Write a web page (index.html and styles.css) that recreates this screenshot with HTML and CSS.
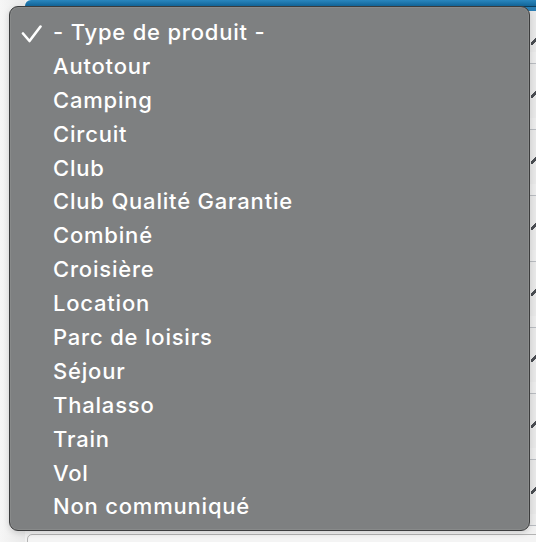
FILE: index.html
```html
<!DOCTYPE html>
<html lang="fr">
<head>
<meta charset="utf-8">
<title>Type de produit</title>
<link rel="stylesheet" href="styles.css">
</head>
<body>
<div class="page">
  <div class="shade"></div>
  <div class="table">
    <div class="head"></div>
    <div class="row first"><span class="tick"></span></div>
    <div class="row"><span class="tick"></span></div>
    <div class="row"><span class="tick"></span></div>
    <div class="row"><span class="tick"></span></div>
    <div class="row"><span class="tick"></span></div>
    <div class="row"><span class="tick"></span></div>
    <div class="row"><span class="tick"></span></div>
    <div class="row"><span class="tick"></span></div>
  </div>
  <div class="below"></div>
</div>

<ul class="menu">
  <li class="item selected">
    <svg class="check" width="22" height="18" viewBox="0 0 22 18"><polyline points="2,8.5 8.5,16 19.5,1.5" fill="none" stroke="#fff" stroke-width="2.6" stroke-linecap="round" stroke-linejoin="round"/></svg>
    <span>- Type de produit -</span>
  </li>
  <li class="item"><span>Autotour</span></li>
  <li class="item"><span>Camping</span></li>
  <li class="item"><span>Circuit</span></li>
  <li class="item"><span>Club</span></li>
  <li class="item"><span>Club Qualité Garantie</span></li>
  <li class="item"><span>Combiné</span></li>
  <li class="item"><span>Croisière</span></li>
  <li class="item"><span>Location</span></li>
  <li class="item"><span>Parc de loisirs</span></li>
  <li class="item"><span>Séjour</span></li>
  <li class="item"><span>Thalasso</span></li>
  <li class="item"><span>Train</span></li>
  <li class="item"><span>Vol</span></li>
  <li class="item"><span>Non communiqué</span></li>
</ul>
</body>
</html>
```

FILE: styles.css
```css
html, body {
  margin: 0;
  padding: 0;
  width: 536px;
  height: 542px;
  overflow: hidden;
  background: #f1f1f1;
  font-family: "Inter", "Liberation Sans", sans-serif;
}

.page {
  position: relative;
  width: 536px;
  height: 542px;
  display: flex;
}

.shade {
  width: 25px;
  flex: none;
  background: linear-gradient(to right, #f6f6f6, #e9e9e9);
}

.table {
  flex: 1;
  display: flex;
  flex-direction: column;
}

.head {
  height: 6px;
  flex: none;
  background: linear-gradient(#2a86bd, #13679b);
  border-top-left-radius: 6px;
  border-bottom: 1px solid #0d3c5a;
}

.row {
  height: 65px;
  flex: none;
  position: relative;
  background: #e8e8e8;
  border-bottom: 1px solid #b9bcc1;
  box-shadow: inset 0 -11px 0 #ececec;
}

.row.first {
  height: 52px;
  border-top: 4px solid #2b7fb5;
}

.tick {
  position: absolute;
  right: 0;
  top: 26px;
  width: 5px;
  height: 8px;
  background: linear-gradient(135deg, transparent 45%, #4a4d52 45%, #4a4d52 75%, transparent 75%);
}

.below {
  position: absolute;
  left: 27px;
  top: 534px;
  width: 520px;
  height: 20px;
  border: 1px solid #b3b3b3;
  border-radius: 5px;
  background: #f4f4f4;
}

.menu {
  position: absolute;
  left: 9px;
  top: 6px;
  width: 521px;
  height: 525px;
  margin: 0;
  padding: 8px 0 7px;
  box-sizing: border-box;
  list-style: none;
  background: #7e8081;
  border: 1px solid #3b3c3d;
  border-radius: 9px;
  box-shadow: 0 0 0 1px rgba(255,255,255,0.08) inset, 0 2px 6px rgba(0,0,0,0.15);
  display: flex;
  flex-direction: column;
}

.item {
  height: 33.9px;
  flex: none;
  display: flex;
  align-items: center;
  padding-left: 43px;
  position: relative;
  color: #ffffff;
  font-size: 22px;
  font-weight: 500;
  letter-spacing: 0.8px;
  white-space: nowrap;
}

.check {
  position: absolute;
  left: 11px;
  top: 10px;
}
```
